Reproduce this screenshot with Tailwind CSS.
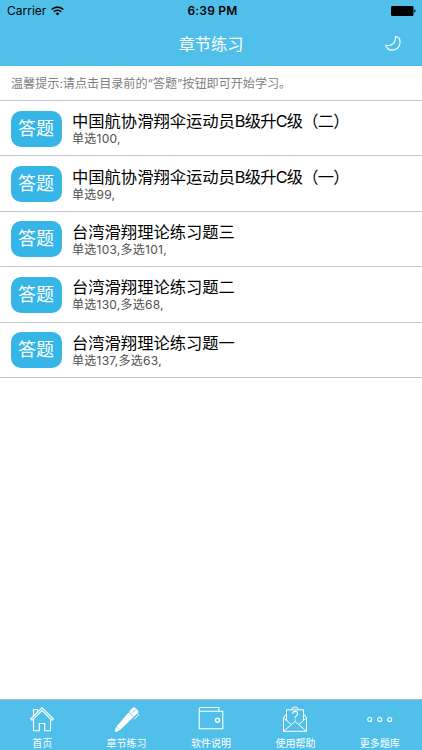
<!DOCTYPE html>
<html lang="zh-CN">
<head>
  <meta charset="UTF-8">
  <meta name="viewport" content="width=device-width, initial-scale=1.0">
  <title>章节练习</title>
  <script src="https://cdn.jsdelivr.net/npm/@tailwindcss/browser@4"></script>
</head>
<body class="bg-white font-['Inter','Noto_Sans_CJK_SC',sans-serif]">
  <div class="flex h-[750px] w-full flex-col overflow-hidden">
    <!-- Header -->
    <header class="h-[66px] shrink-0 bg-[#50c0eb]">
      <div class="grid h-[22px] grid-cols-3 items-center pl-[7px] pr-[6px] text-black">
        <div class="flex items-center gap-[5px]">
          <span class="text-[12px] leading-[22px]">Carrier</span>
          <svg class="h-[10px] w-[13px]" viewBox="0 0 13 10" fill="none" stroke="#000" stroke-width="1.6">
            <path d="M0.7 3.5a8.3 8.3 0 0 1 11.6 0M2.8 5.7a5.3 5.3 0 0 1 7.4 0" />
            <path d="M6.5 9.6L4.5 7.4a2.9 2.9 0 0 1 4 0z" fill="#000" stroke="none" />
          </svg>
        </div>
        <span class="pl-[2px] text-center text-[12px] font-semibold leading-[22px] tracking-[0.2px]">6:39 PM</span>
        <svg class="h-[10px] w-[25px] justify-self-end" viewBox="0 0 25 10">
          <rect x="0" y="0" width="22.5" height="10" rx="1.2" />
          <path d="M23.3 3.3c1.6 0.3 1.6 3.1 0 3.4z" />
        </svg>
      </div>
      <div class="grid h-11 grid-cols-[1fr_auto_1fr] items-center text-white">
        <span></span>
        <h1 class="text-[16.2px] leading-[44px]">章节练习</h1>
        <svg class="mr-[21px] h-4 w-4 justify-self-end" viewBox="0 0 16 16" fill="none" stroke="#fff" stroke-width="1.1" stroke-linejoin="round">
          <path d="M10.4 0.6C13.3 0.6 15.1 3 15.1 6.3C15.1 11 11.7 14.1 7.3 14.1C3.8 14.1 0.9 12 0.8 9.1C2.2 9.9 5.5 10 7.9 7.8C10.2 5.7 10.7 3.1 10.4 0.6z" />
        </svg>
      </div>
    </header>

    <!-- Chapter list -->
    <main class="flex-1">
      <p class="h-[35px] border-b border-[#c8c8cb] pl-[11px] text-[12.1px] leading-[36px] text-[#808080]">温馨提示:请点击目录前的“答题”按钮即可开始学习。</p>
      <ul id="chapters"></ul>
    </main>

    <!-- Tab bar -->
    <nav class="grid h-[51px] shrink-0 grid-cols-5 border-t border-[#a5bfc9] bg-[#50c0eb] text-[10px] leading-[14px] text-white">
      <a class="flex flex-col items-center pt-[6px]">
        <svg class="h-[28px] w-[26px] shrink-0" viewBox="0 0 26 28" fill="none" stroke="#fff" stroke-width="1.1">
          <path d="M1.6 13L13 1.8L24.4 13L23 14.3L13 4.5L3 14.3z" />
          <path d="M4.5 13V24.8H10.3V17.5H15.7V24.8H21.5V13M4.5 9.7V3.5H8.3V6" />
        </svg>
        <span class="mt-[2px]">首页</span>
      </a>
      <a class="flex flex-col items-center pt-[6px]">
        <!-- Pen: solid barrel, cap with a clip -->
        <svg class="h-[28px] w-[26px] shrink-0" viewBox="0 0 26 28">
          <path fill="#fff" d="M18.6 1.8Q20 .6 21.2 1.8L24 4.4Q25 5.6 24 6.8L6.6 23.6L3.2 25.4L1.2 25.9Q.6 24.8 1.3 23L3 20z" />
          <path fill="none" stroke="#50c0eb" stroke-width=".8" d="M14.6 6L19.2 10.6M17.6 7.2L21.6 3.6" />
          <path fill="none" stroke="#50c0eb" stroke-width=".7" d="M3.6 21.4L5.4 23.2" />
          <path fill="none" stroke="#fff" stroke-width="1" d="M23.2 7.2L24.8 8.6L20 13.4" />
        </svg>
        <span class="mt-[2px]">章节练习</span>
      </a>
      <a class="flex flex-col items-center pt-[6px]">
        <svg class="h-[28px] w-[26px] shrink-0" viewBox="0 0 26 28" fill="none" stroke="#fff" stroke-width="1.1">
          <path d="M1.2 5.3V3.3Q1.2 1.5 3 1.5H20.8V5.2M1.2 5.2H24.8V22.8H1.2z" />
          <circle cx="19.5" cy="14.3" r="2" stroke-width="1.4" />
        </svg>
        <span class="mt-[2px]">软件说明</span>
      </a>
      <a class="flex flex-col items-center pt-[6px]">
        <svg class="h-[28px] w-[26px] shrink-0" viewBox="0 0 26 28" fill="none" stroke="#fff" stroke-width="1" stroke-linejoin="round">
          <path d="M4.5 7.8L1.5 12V25.3H24.5V12L21.5 7.8M1.5 12L9.2 18.4M24.5 12L16.8 18.4M1.5 25.3L13 15.5L24.5 25.3" />
          <path d="M4.5 14.5V3.8H21.5V14.5M9.5 3.8Q10 1 13 1Q16 1 16.5 3.8" />
          <path d="M10.5 7.6Q10.7 5.4 13.1 5.4Q15.6 5.4 15.6 7.6Q15.6 9 14.2 10.1Q13.1 10.9 13.1 12.2M13.1 13.4V14.6" stroke-width="1.1" />
        </svg>
        <span class="mt-[2px]">使用帮助</span>
      </a>
      <a class="flex flex-col items-center pt-[6px]">
        <svg class="h-[28px] w-[26px] shrink-0" viewBox="0 0 26 28" fill="none" stroke="#fff" stroke-width="1.1">
          <circle cx="2.7" cy="13.5" r="2" />
          <circle cx="12.7" cy="13.5" r="2" />
          <circle cx="22.7" cy="13.5" r="2" />
        </svg>
        <span class="mt-[2px]">更多题库</span>
      </a>
    </nav>
  </div>

  <script>
    const chapters = [
      { title: '中国航协滑翔伞运动员', level: 'B级升C级（二）', count: '单选100,' },
      { title: '中国航协滑翔伞运动员', level: 'B级升C级（一）', count: '单选99,' },
      { title: '台湾滑翔理论练习题三', level: '', count: '单选103,多选101,' },
      { title: '台湾滑翔理论练习题二', level: '', count: '单选130,多选68,' },
      { title: '台湾滑翔理论练习题一', level: '', count: '单选137,多选63,' },
    ];

    document.getElementById('chapters').innerHTML = chapters.map(item => `
      <li class="flex h-[55.4px] items-center border-b border-[#c8c8cb] pl-[10.5px] pt-px">
        <button class="h-[36px] w-[51px] shrink-0 rounded-[10px] bg-[#35b6e7] text-[18px] leading-[36px] text-white">答题</button>
        <div class="ml-[10.5px] whitespace-nowrap">
          <h2 class="text-[16.3px] leading-[20px] text-black">${item.title}<span class="tracking-[-0.8px]">${item.level}</span></h2>
          <p class="text-[12px] leading-[15px] tracking-[0.25px] text-[#505050]">${item.count}</p>
        </div>
      </li>
    `).join('');
  </script>
</body>
</html>
